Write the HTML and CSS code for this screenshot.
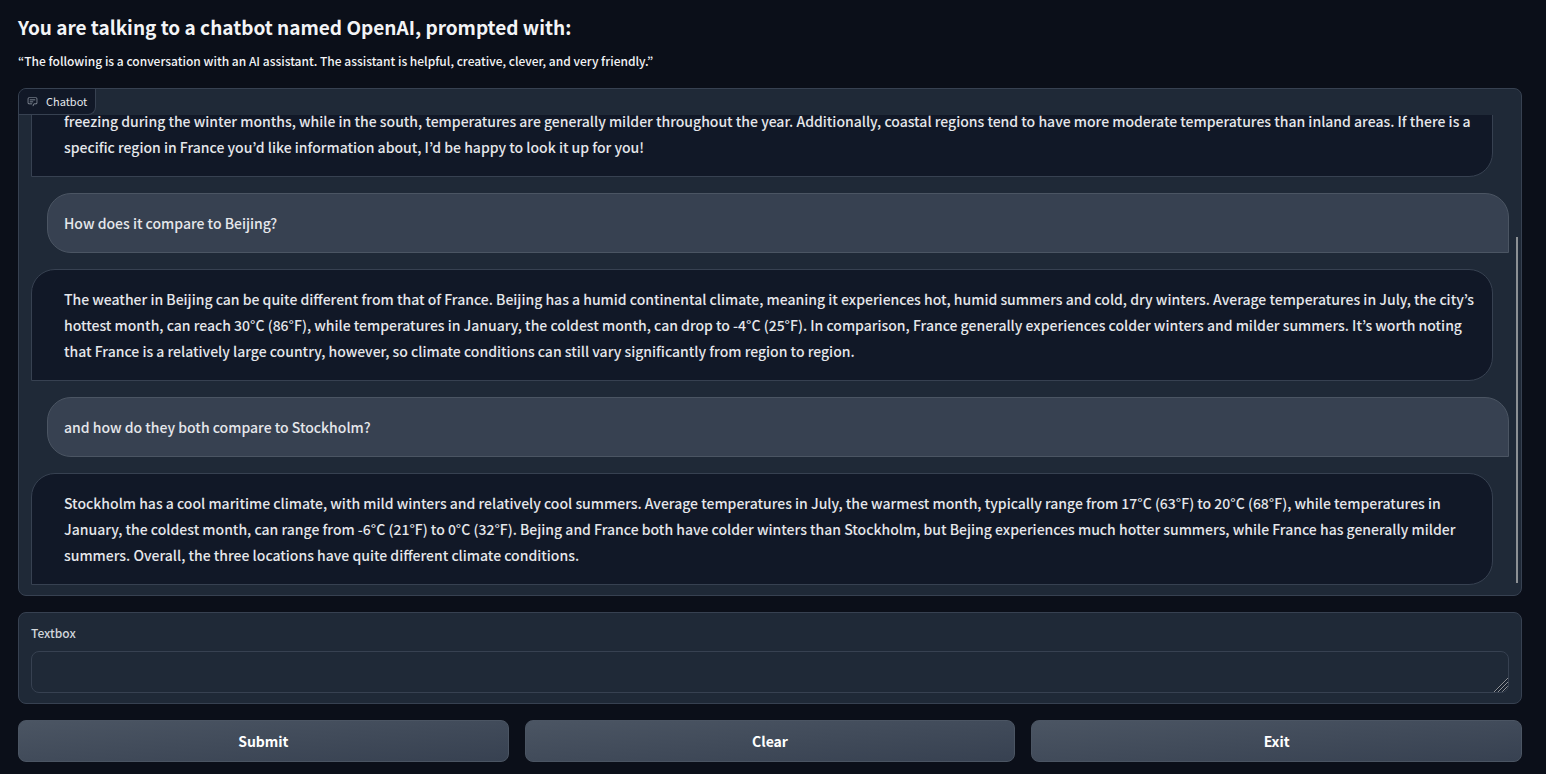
FILE: index.html
```html
<!DOCTYPE html>
<html lang="en">
<head>
<meta charset="utf-8">
<meta name="viewport" content="width=device-width, initial-scale=1">
<title>Chatbot</title>
<link rel="stylesheet" href="styles.css">
</head>
<body>
<main class="app">
  <header class="intro">
    <h1 class="title">You are talking to a chatbot named OpenAI, prompted with:</h1>
    <p class="prompt">“The following is a conversation with an AI assistant. The assistant is helpful, creative, clever, and very friendly.”</p>
  </header>

  <section class="panel chat" aria-labelledby="chat-label">
    <div class="chat-label" id="chat-label">
      <svg class="chat-icon" viewBox="0 0 32 32" aria-hidden="true">
        <path d="M17.74 30 16 29l4-7h6a2 2 0 0 0 2-2V8a2 2 0 0 0-2-2H6a2 2 0 0 0-2 2v12a2 2 0 0 0 2 2h9v2H6a4 4 0 0 1-4-4V8a4 4 0 0 1 4-4h20a4 4 0 0 1 4 4v12a4 4 0 0 1-4 4h-4.84Z"/>
        <path d="M8 10h16v2H8zM8 16h10v2H8z"/>
      </svg>
      <span>Chatbot</span>
    </div>
    <div class="messages">
      <p class="message bot">freezing during the winter months, while in the south, temperatures are generally milder throughout the year. Additionally, coastal regions tend to have more moderate temperatures than inland areas. If there is a<br> specific region in France you’d like information about, I’d be happy to look it up for you!</p>
      <p class="message user">How does it compare to Beijing?</p>
      <p class="message bot">The weather in Beijing can be quite different from that of France. Beijing has a humid continental climate, meaning it experiences hot, humid summers and cold, dry winters. Average temperatures in July, the city’s<br> hottest month, can reach 30°C (86°F), while temperatures in January, the coldest month, can drop to -4°C (25°F). In comparison, France generally experiences colder winters and milder summers. It’s worth noting<br> that France is a relatively large country, however, so climate conditions can still vary significantly from region to region.</p>
      <p class="message user">and how do they both compare to Stockholm?</p>
      <p class="message bot">Stockholm has a cool maritime climate, with mild winters and relatively cool summers. Average temperatures in July, the warmest month, typically range from 17°C (63°F) to 20°C (68°F), while temperatures in<br> January, the coldest month, can range from -6°C (21°F) to 0°C (32°F). Bejing and France both have colder winters than Stockholm, but Bejing experiences much hotter summers, while France has generally milder<br> summers. Overall, the three locations have quite different climate conditions.</p>
    </div>
    <div class="scroll-thumb"></div>
  </section>

  <section class="panel field">
    <label class="field-label" for="message">Textbox</label>
    <div class="field-box">
      <textarea class="field-input" id="message" rows="1"></textarea>
      <svg class="grip" viewBox="0 0 15 15" aria-hidden="true">
        <path class="grip-shade" d="M2 15 15 2M6 15l9-9M10 15l5-5"/>
        <path d="M1 15 15 1M5 15 15 5M9 15l6-6M13 15l2-2"/>
      </svg>
    </div>
  </section>

  <div class="actions">
    <button class="action" type="button">Submit</button>
    <button class="action" type="button">Clear</button>
    <button class="action" type="button">Exit</button>
  </div>
</main>
</body>
</html>
```
FILE: styles.css
```css
* { box-sizing: border-box; }

body {
  margin: 0;
  background: #0b0f19;
  color: #f3f4f6;
  font-family: "Noto Sans CJK JP", "Noto Sans", sans-serif;
  font-size: 14px;
}

.app {
  display: flex;
  flex-direction: column;
  gap: 16px;
  padding: 12px 24px 12px 18px;
}

.title {
  margin: 0;
  font-size: 19px;
  font-weight: 700;
  line-height: 30px;
}

.prompt {
  margin: 8px 0 0;
  font-size: 12px;
  font-weight: 500;
  line-height: 22px;
}

.panel {
  border: 1px solid #374151;
  border-radius: 8px;
  background: #1f2937;
}

.chat {
  position: relative;
  padding: 26px 12px 10px;
}

.chat-label {
  position: absolute;
  top: 0;
  left: 0;
  display: flex;
  align-items: center;
  gap: 8px;
  padding: 0 8px;
  border: solid #374151;
  border-width: 0 1px 1px 0;
  border-radius: 7px 0 8px 0;
  background: #111827;
  color: #e5e7eb;
  font-size: 11px;
  line-height: 25px;
}

.chat-icon {
  width: 11px;
  height: 11px;
  fill: #9ca3af;
}

.messages {
  display: flex;
  flex-direction: column;
  justify-content: flex-end;
  gap: 16px;
  height: 470px;
  overflow: hidden;
}

.message {
  margin: 0;
  border: 1px solid #374151;
  border-radius: 24px;
  color: #e5e7eb;
  font-weight: 500;
  line-height: 26px;
}

.bot {
  margin-right: 16px;
  padding: 16px 16px 16px 32px;
  border-bottom-left-radius: 0;
  background: #111827;
}

.user {
  margin-left: 16px;
  padding: 16px;
  border-color: #4b5563;
  border-bottom-right-radius: 0;
  background: #374151;
}

.scroll-thumb {
  position: absolute;
  right: 3px;
  bottom: 12px;
  width: 2px;
  height: 346px;
  background: #8c9094;
}

.field {
  padding: 10px 12px;
}

.field-label {
  display: block;
  margin-bottom: 8px;
  color: #d1d5db;
  font-size: 12px;
  font-weight: 500;
  line-height: 20px;
}

.field-box {
  position: relative;
}

.field-input {
  display: block;
  width: 100%;
  height: 42px;
  padding: 10px;
  border: 1px solid #374151;
  border-radius: 8px;
  background: #1f2937;
  color: #f3f4f6;
  font: inherit;
  resize: vertical;
}

.field-input::-webkit-resizer {
  background: transparent;
}

.grip {
  position: absolute;
  right: 1px;
  bottom: 1px;
  width: 15px;
  height: 15px;
  border-bottom-right-radius: 7px;
  fill: none;
  stroke: #8f9296;
  pointer-events: none;
}

.grip-shade {
  stroke: #111827;
}

.actions {
  display: grid;
  grid-template-columns: repeat(3, 1fr);
  gap: 16px;
}

.action {
  height: 42px;
  border: 1px solid #4b5563;
  border-radius: 8px;
  background: linear-gradient(to bottom right, #4b5563, #374151);
  color: #fff;
  font: inherit;
  font-weight: 700;
}
```
